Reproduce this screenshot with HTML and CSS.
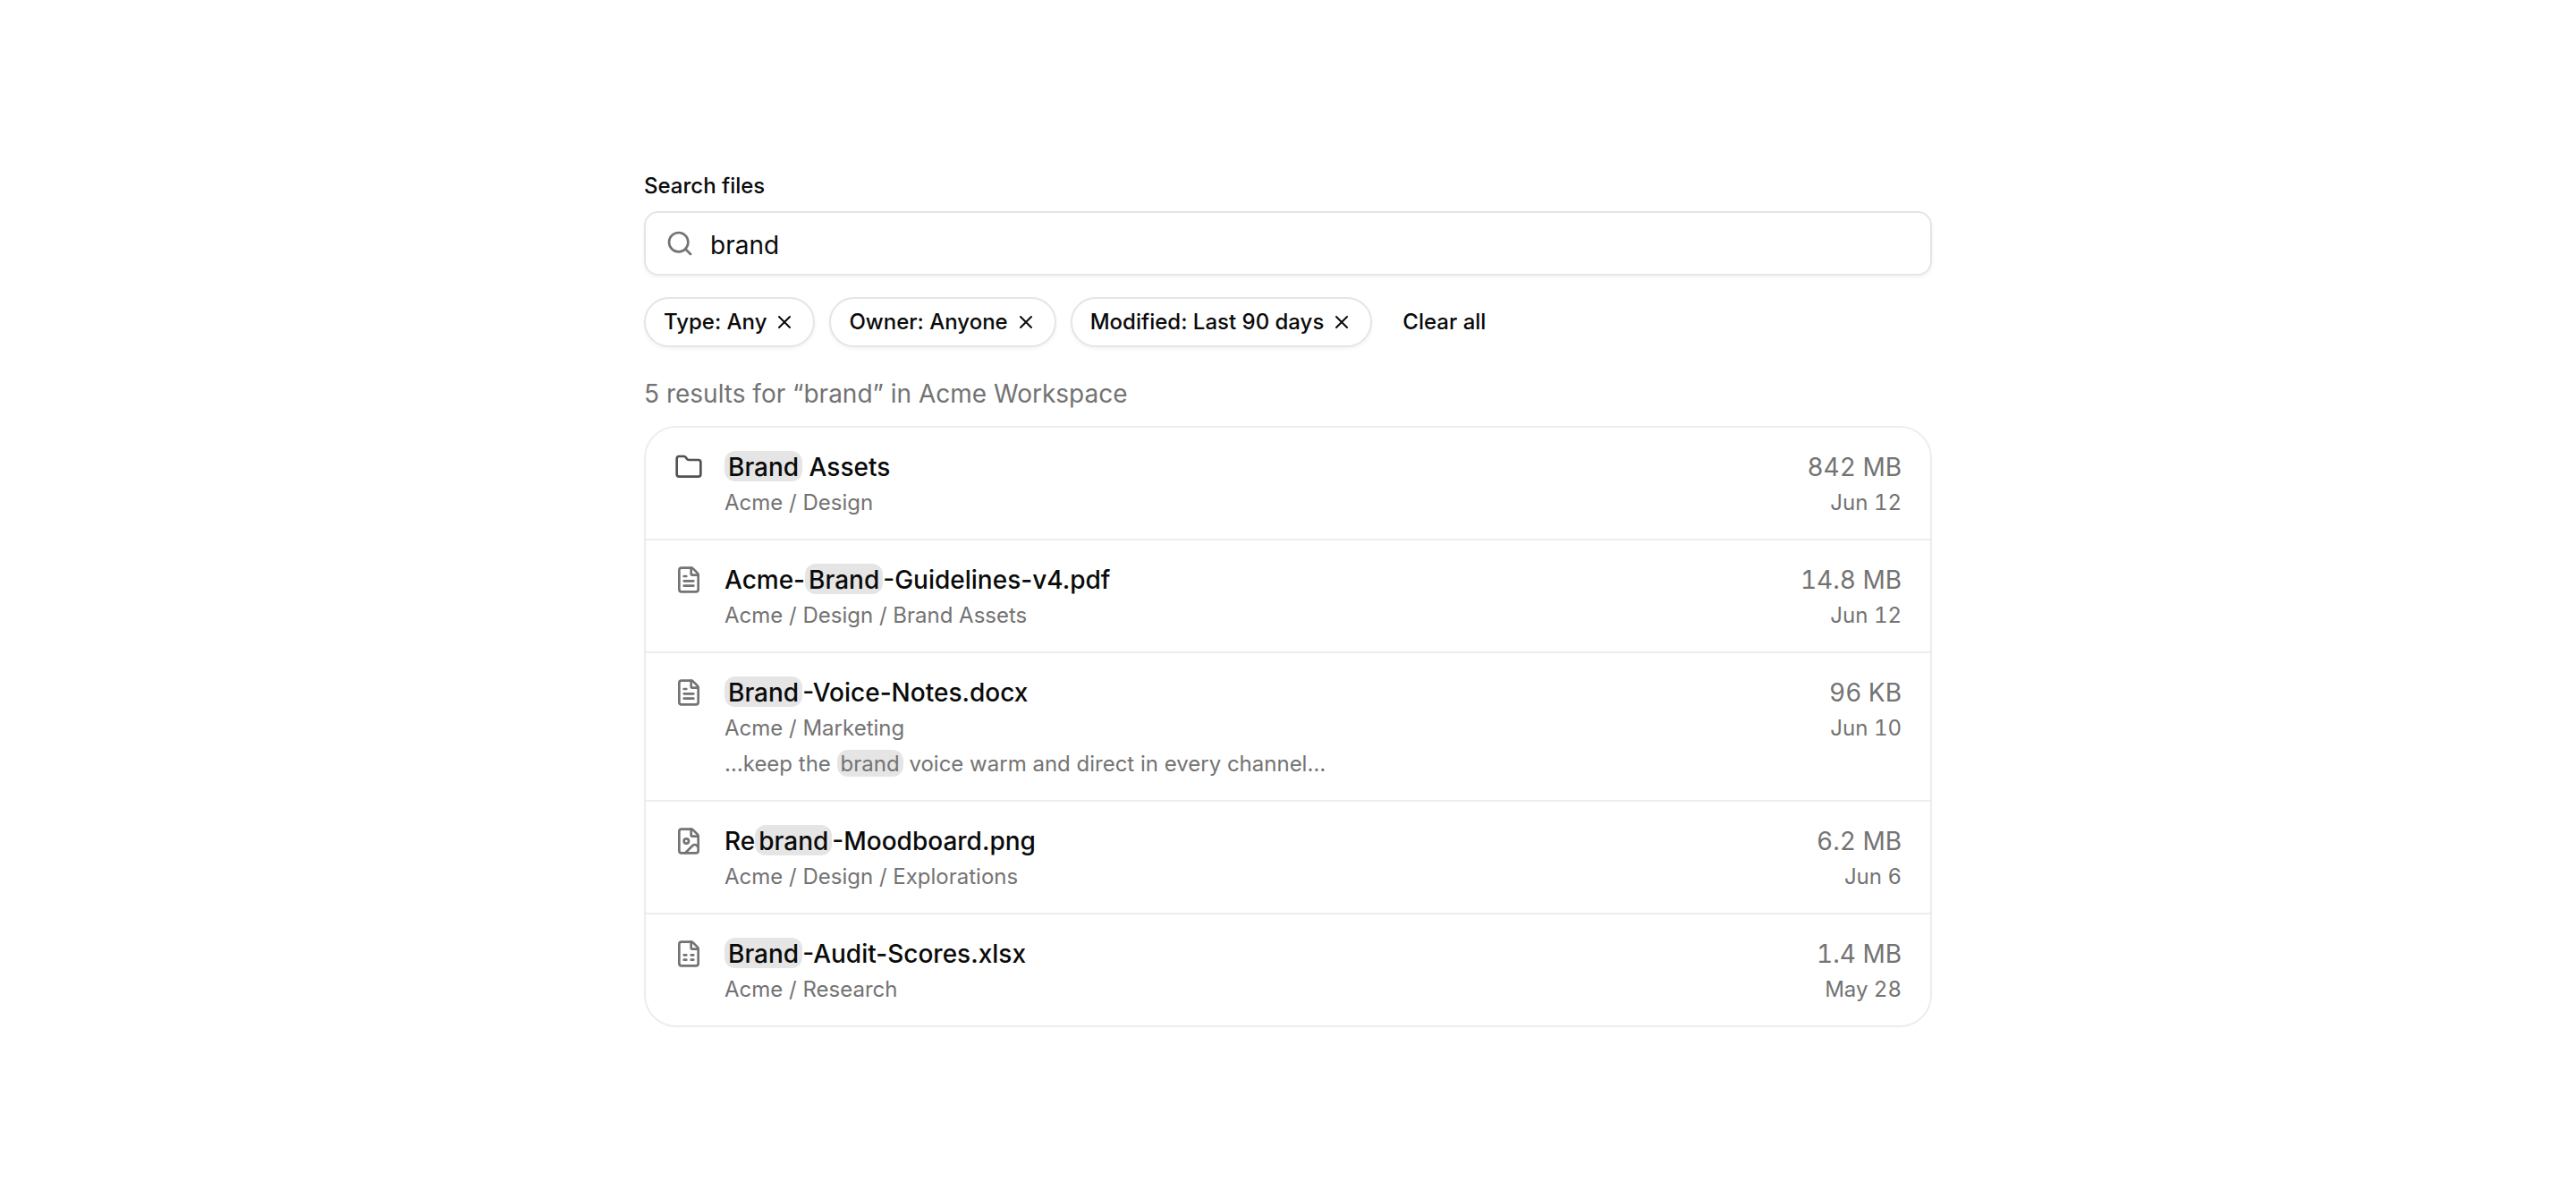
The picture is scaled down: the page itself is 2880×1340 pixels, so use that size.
FILE: index.html
```
<!DOCTYPE html>
<html lang="en">
	<head>
		<meta charset="UTF-8">
		<title>Search files</title>
		<link rel="stylesheet" href="styles.css">
	</head>
	<body>
		<main class="search">
			<label class="label" for="query">Search files</label>
			<div class="field">
				<svg class="icon search-icon" viewBox="0 0 24 24"><circle cx="11" cy="11" r="8"/><path d="m21 21-4.34-4.34"/></svg>
				<input class="input" id="query" type="text" value="brand">
			</div>
			<div class="filters">
				<button class="chip" type="button">Type: Any<svg class="icon close" viewBox="0 0 24 24"><path d="M18 6 6 18M6 6l12 12"/></svg></button>
				<button class="chip" type="button">Owner: Anyone<svg class="icon close" viewBox="0 0 24 24"><path d="M18 6 6 18M6 6l12 12"/></svg></button>
				<button class="chip" type="button">Modified: Last 90 days<svg class="icon close" viewBox="0 0 24 24"><path d="M18 6 6 18M6 6l12 12"/></svg></button>
				<button class="clear" type="button">Clear all</button>
			</div>
			<p class="summary">5 results for “brand” in Acme Workspace</p>
			<ul class="results">
				<li class="row">
					<svg class="icon file-icon folder" viewBox="0 0 24 24"><path d="M20 20a2 2 0 0 0 2-2V8a2 2 0 0 0-2-2h-7.9a2 2 0 0 1-1.69-.9L9.6 3.9A2 2 0 0 0 7.93 3H4a2 2 0 0 0-2 2v13a2 2 0 0 0 2 2Z"/></svg>
					<div class="info">
						<div class="name"><mark>Brand</mark> Assets</div>
						<div class="path">Acme / Design</div>
					</div>
					<div class="meta">
						<div class="size">842 MB</div>
						<div class="date">Jun 12</div>
					</div>
				</li>
				<li class="row">
					<svg class="icon file-icon" viewBox="0 0 24 24"><path d="M6 22a2 2 0 0 1-2-2V4a2 2 0 0 1 2-2h8a2.4 2.4 0 0 1 1.704.706l3.588 3.588A2.4 2.4 0 0 1 20 8v12a2 2 0 0 1-2 2z"/><path d="M14 2v5a1 1 0 0 0 1 1h5M10 9H8M16 13H8M16 17H8"/></svg>
					<div class="info">
						<div class="name">Acme-<mark>Brand</mark>-Guidelines-v4.pdf</div>
						<div class="path">Acme / Design / Brand Assets</div>
					</div>
					<div class="meta">
						<div class="size">14.8 MB</div>
						<div class="date">Jun 12</div>
					</div>
				</li>
				<li class="row">
					<svg class="icon file-icon" viewBox="0 0 24 24"><path d="M6 22a2 2 0 0 1-2-2V4a2 2 0 0 1 2-2h8a2.4 2.4 0 0 1 1.704.706l3.588 3.588A2.4 2.4 0 0 1 20 8v12a2 2 0 0 1-2 2z"/><path d="M14 2v5a1 1 0 0 0 1 1h5M10 9H8M16 13H8M16 17H8"/></svg>
					<div class="info">
						<div class="name"><mark>Brand</mark>-Voice-Notes.docx</div>
						<div class="path">Acme / Marketing</div>
						<div class="snippet">…keep the <mark>brand</mark> voice warm and direct in every channel…</div>
					</div>
					<div class="meta">
						<div class="size">96 KB</div>
						<div class="date">Jun 10</div>
					</div>
				</li>
				<li class="row">
					<svg class="icon file-icon" viewBox="0 0 24 24"><path d="M6 22a2 2 0 0 1-2-2V4a2 2 0 0 1 2-2h8a2.4 2.4 0 0 1 1.704.706l3.588 3.588A2.4 2.4 0 0 1 20 8v12a2 2 0 0 1-2 2z"/><path d="M14 2v5a1 1 0 0 0 1 1h5"/><circle cx="10" cy="12" r="2"/><path d="m20 17-1.296-1.296a2.41 2.41 0 0 0-3.408 0L9 22"/></svg>
					<div class="info">
						<div class="name">Re<mark>brand</mark>-Moodboard.png</div>
						<div class="path">Acme / Design / Explorations</div>
					</div>
					<div class="meta">
						<div class="size">6.2 MB</div>
						<div class="date">Jun 6</div>
					</div>
				</li>
				<li class="row">
					<svg class="icon file-icon" viewBox="0 0 24 24"><path d="M6 22a2 2 0 0 1-2-2V4a2 2 0 0 1 2-2h8a2.4 2.4 0 0 1 1.704.706l3.588 3.588A2.4 2.4 0 0 1 20 8v12a2 2 0 0 1-2 2z"/><path d="M14 2v5a1 1 0 0 0 1 1h5M8 13h2M14 13h2M8 17h2M14 17h2"/></svg>
					<div class="info">
						<div class="name"><mark>Brand</mark>-Audit-Scores.xlsx</div>
						<div class="path">Acme / Research</div>
					</div>
					<div class="meta">
						<div class="size">1.4 MB</div>
						<div class="date">May 28</div>
					</div>
				</li>
			</ul>
		</main>
	</body>
</html>
```
FILE: styles.css
```
*{
	margin: 0;
	padding: 0;
	box-sizing: border-box;
}
body{
	min-height: 1340px;
	display: flex;
	justify-content: center;
	align-items: center;
	background: white;
	color: #0a0a0a;
	font-family: Inter, "Liberation Sans", sans-serif;
	font-size: 28px;
	line-height: 40px;
}
.search{
	width: 1440px;
}
.icon{
	flex: none;
	fill: none;
	stroke: currentColor;
	stroke-width: 2;
	stroke-linecap: round;
	stroke-linejoin: round;
}
.label{
	display: block;
	font-size: 24px;
	font-weight: 500;
	line-height: 32px;
	margin-bottom: 12px;
}
.field{
	height: 72px;
	display: flex;
	align-items: center;
	gap: 18px;
	padding: 0 22px;
	border: solid 2px #e5e5e5;
	border-radius: 16px;
	box-shadow: 0 2px 4px rgba(0,0,0,0.05);
}
.search-icon{
	width: 32px;
	height: 32px;
	color: #737373;
}
.input{
	flex: 1;
	padding-top: 4px;
	border: none;
	outline: none;
	background: none;
	font: inherit;
	color: inherit;
}
.filters{
	display: flex;
	gap: 16px;
	margin-top: 24px;
}
.chip,.clear{
	height: 56px;
	display: flex;
	align-items: center;
	gap: 8px;
	padding: 0 20px;
	border: solid 2px #e5e5e5;
	border-radius: 28px;
	background: white;
	color: inherit;
	font: 500 24px/32px Inter, "Liberation Sans", sans-serif;
	box-shadow: 0 2px 4px rgba(0,0,0,0.05);
}
.clear{
	padding: 0 18px;
	border: none;
	box-shadow: none;
}
.close{
	width: 24px;
	height: 24px;
}
.summary{
	margin-top: 32px;
	color: #737373;
}
.results{
	margin-top: 16px;
	list-style: none;
	border: solid 2px #ededed;
	border-radius: 36px;
}
.row{
	display: flex;
	padding: 24px 32px 22px;
	border-bottom: solid 2px #ededed;
}
.row:last-child{
	border-bottom: none;
}
.file-icon{
	width: 32px;
	height: 32px;
	margin-top: 4px;
	color: #737373;
}
.folder{
	color: #525252;
}
.info{
	flex: 1;
	margin-left: 24px;
}
.name{
	font-weight: 500;
}
.path,.snippet,.date{
	margin-top: 2px;
	color: #737373;
	font-size: 24px;
	line-height: 36px;
}
.snippet{
	margin-top: 4px;
}
.meta{
	text-align: right;
	color: #737373;
	font-variant-numeric: tabular-nums;
}
mark{
	padding: 1px 4px 0;
	border-radius: 12px;
	background: #e5e5e5;
	color: inherit;
}
.name mark{
	display: inline-block;
	height: 34px;
	padding: 0 4px;
	line-height: 36px;
}
```
